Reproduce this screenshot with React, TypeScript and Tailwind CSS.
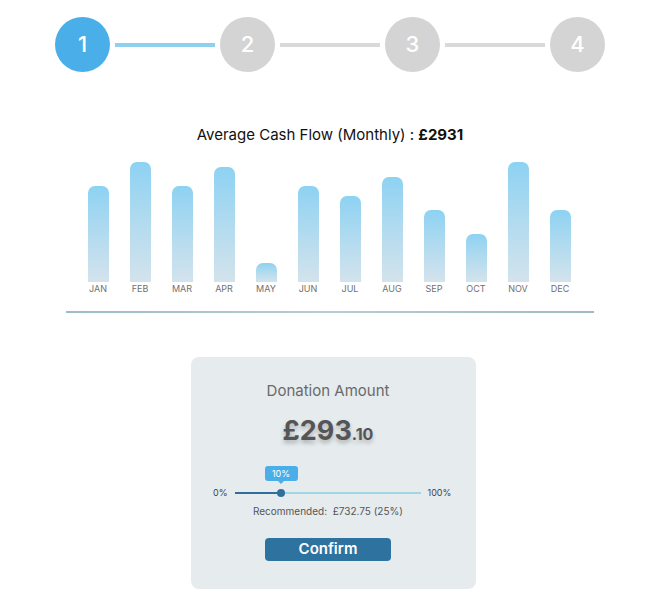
import React from 'react';

const steps = [1, 2, 3, 4];

const months = [
  { label: 'JAN', h: 96 },
  { label: 'FEB', h: 120 },
  { label: 'MAR', h: 96 },
  { label: 'APR', h: 115 },
  { label: 'MAY', h: 19 },
  { label: 'JUN', h: 96 },
  { label: 'JUL', h: 86 },
  { label: 'AUG', h: 105 },
  { label: 'SEP', h: 72 },
  { label: 'OCT', h: 48 },
  { label: 'NOV', h: 120 },
  { label: 'DEC', h: 72 },
];

const Stepper = () => (
  <div className="flex items-center pl-[55px] pt-[17px]">
    {steps.map((n, i) => (
      <React.Fragment key={n}>
        {i > 0 && (
          <div
            className={`mx-[5px] h-[4px] w-[100px] ${
              i === 1 ? 'bg-[#8fd0ef]' : 'bg-[#d9d9d9]'
            }`}
          />
        )}
        <div
          className={`flex h-[55px] w-[55px] items-center justify-center rounded-full text-[22px] font-medium text-white ${
            n === 1 ? 'bg-[#4aafe9]' : 'bg-[#d4d4d4]'
          }`}
        >
          {n}
        </div>
      </React.Fragment>
    ))}
  </div>
);

const Chart = () => (
  <div>
    <p className="mt-[53px] pl-[4px] text-center text-[15px] leading-[20px] text-[#111]">
      Average Cash Flow (Monthly) : <span className="font-bold">£2931</span>
    </p>
    <div className="mt-[17px] flex pl-[77px]">
      {months.map((m) => (
        <div key={m.label} className="flex w-[42px] flex-col items-center">
          <div className="flex h-[120px] items-end">
            <div
              className="w-[21px] rounded-t-[7px] bg-gradient-to-b from-[#8dd2f2] to-[#d3e3ec]"
              style={{ height: m.h }}
            />
          </div>
          <span className="mt-[1px] text-[9px] leading-[12px] text-[#707070]">{m.label}</span>
        </div>
      ))}
    </div>
    <div className="ml-[66px] mt-[16px] h-[2px] w-[528px] bg-gradient-to-r from-[#9dbcc8] via-[#b8ccd4] to-[#9fbac4]" />
  </div>
);

const DonationCard = () => (
  <div className="ml-[191px] mt-[44px] flex h-[232px] w-[285px] flex-col items-center rounded-[8px] bg-[#e6ebee] pr-[11px]">
    <p className="pt-[24px] text-[15px] leading-[20px] text-[#6a6a6a]">Donation Amount</p>
    <p className="mt-[13px] text-[27px] font-bold leading-[34px] text-[#555] [text-shadow:0_3px_4px_rgba(0,0,0,0.25)]">
      £293<span className="text-[16px]">.10</span>
    </p>
    <div className="mt-[23px] flex w-full items-center pl-[22px] pt-[12px] text-[9px] text-[#444]">
      <span>0%</span>
      <div className="relative mx-[7px] flex h-[8px] w-[186px] items-center">
        <div className="h-[2px] w-[46px] bg-[#2e6f9e]" />
        <div className="h-[2px] flex-1 bg-[#a3d5e7]" />
        <div className="absolute left-[42px] top-0 h-[8px] w-[8px] rounded-full bg-[#2e6f9e]" />
        <div className="absolute -top-[23px] left-[30px] flex h-[15px] w-[33px] items-center justify-center rounded-[3px] bg-[#4aafe9] text-[9px] text-white">
          10%
          <div className="absolute -bottom-[3px] left-1/2 h-0 w-0 -translate-x-1/2 border-x-[3px] border-t-[3px] border-x-transparent border-t-[#4aafe9]" />
        </div>
      </div>
      <span>100%</span>
    </div>
    <p className="mt-[4px] text-[10px] leading-[14px] text-[#555]">
      Recommended:&nbsp; £732.75 (25%)
    </p>
    <button className="mt-[20px] flex h-[23px] w-[126px] items-center justify-center rounded-[4px] bg-[#2e73a0] text-[15px] font-semibold text-white">
      Confirm
    </button>
  </div>
);

export default function App() {
  return (
    <div className="h-[610px] w-[656px] overflow-hidden bg-white font-['Inter',sans-serif]">
      <Stepper />
      <Chart />
      <DonationCard />
    </div>
  );
}
